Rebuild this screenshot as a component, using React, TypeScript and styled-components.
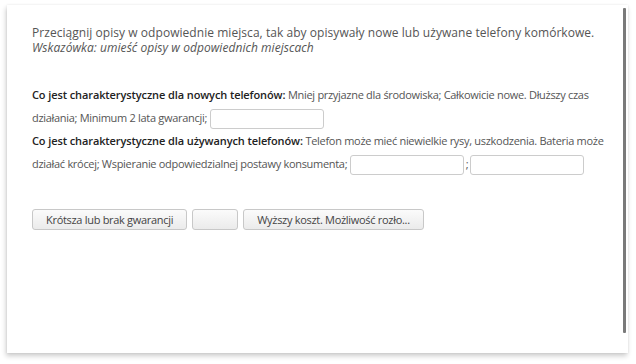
import styled, { createGlobalStyle } from "styled-components";

const GlobalStyle = createGlobalStyle`
  html, body {
    margin: 0;
    padding: 0;
    background: #ffffff;
  }
  body {
    font-family: "Open Sans", "Liberation Sans", sans-serif;
    color: #555555;
  }
`;

const newPhoneText =
  "Mniej przyjazne dla środowiska; Całkowicie nowe. Dłuższy czas działania; Minimum 2 lata gwarancji;";
const usedPhoneText =
  "Telefon może mieć niewielkie rysy, uszkodzenia. Bateria może działać krócej; Wspieranie odpowiedzialnej postawy konsumenta;";

const choices = ["Krótsza lub brak gwarancji", "", "Wyższy koszt. Możliwość rozło..."];

export default function App() {
  return (
    <>
      <GlobalStyle />
      <Frame>
        <Card>
          <Content>
            <Instruction>
              Przeciągnij opisy w odpowiednie miejsca, tak aby opisywały nowe lub używane telefony komórkowe.
              <Hint>Wskazówka: umieść opisy w odpowiednich miejscach</Hint>
            </Instruction>

            <Question>
              <Label>Co jest charakterystyczne dla nowych telefonów:</Label> {newPhoneText}{" "}
              <DropSlot />
              <br />
              <Label>Co jest charakterystyczne dla używanych telefonów:</Label> {usedPhoneText}{" "}
              <DropSlot />
              <Sep>;</Sep>
              <DropSlot />
            </Question>

            <Choices>
              {choices.map((c, i) => (
                <Choice key={i} $empty={!c}>
                  {c}
                </Choice>
              ))}
            </Choices>
          </Content>
          <ScrollThumb />
        </Card>
      </Frame>
    </>
  );
}

const Frame = styled.div`
  padding: 5px 8px 11px 7px;
  height: 364px;
  box-sizing: border-box;
`;

const Card = styled.div`
  position: relative;
  height: 100%;
  background: #ffffff;
  box-shadow: -1px 3px 5px rgba(0, 0, 0, 0.2), 0 0 2px rgba(0, 0, 0, 0.08);
`;

const Content = styled.div`
  padding: 20px 15px 0 25px;
`;

const Instruction = styled.div`
  font-size: 12px;
  line-height: 15px;
  letter-spacing: 0.05px;
  color: #555555;
`;

const Hint = styled.div`
  font-style: italic;
`;

const Question = styled.div`
  margin-top: 28px;
  font-size: 11px;
  line-height: 23px;
  letter-spacing: -0.3px;
  color: #555555;
`;

const Label = styled.b`
  font-weight: 600;
  letter-spacing: -0.1px;
  color: #222222;
`;

const DropSlot = styled.span`
  display: inline-block;
  vertical-align: middle;
  width: 112px;
  height: 18px;
  border: 1px solid #cccccc;
  border-radius: 3px;
  background: #ffffff;
`;

const Sep = styled.span`
  margin: 0 2px;
`;

const Choices = styled.div`
  display: flex;
  gap: 5px;
  margin-top: 34px;
`;

const Choice = styled.div<{ $empty: boolean }>`
  min-width: ${({ $empty }) => ($empty ? "46px" : "0")};
  padding: 0 13px;
  box-sizing: border-box;
  height: 21px;
  border: 1px solid #c8c8c8;
  border-radius: 3px;
  background: linear-gradient(#fbfbfb, #ebebeb);
  font-size: 11px;
  letter-spacing: -0.3px;
  line-height: 19px;
  color: #444444;
  white-space: nowrap;
`;

const ScrollThumb = styled.div`
  position: absolute;
  top: 3px;
  right: 2px;
  width: 3px;
  height: 325px;
  background: #7a7a7a;
  border-radius: 1px;
`;
